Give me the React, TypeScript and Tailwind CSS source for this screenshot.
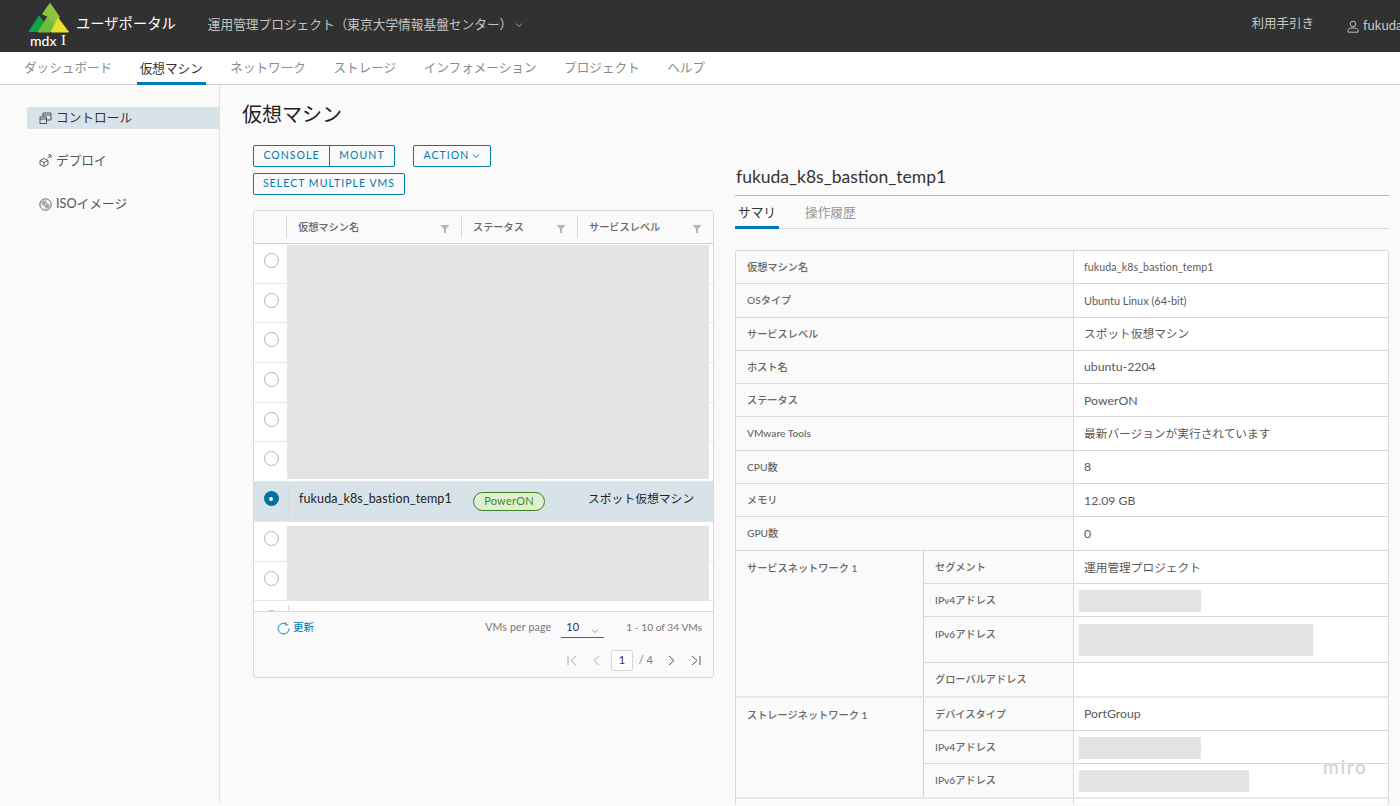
const font = "font-['Lato','Noto_Sans_CJK_JP',sans-serif]";

function Logo() {
  return (
    <svg width="42" height="30" viewBox="0 0 42 30" className="block" strokeLinejoin="round">
      <polygon points="1,28.5 11,13 17,21 11,28.5" fill="#12a04a" stroke="#12a04a" strokeWidth="1" />
      <polygon points="10,29 20,13 27,21 22,29" fill="#6fbb3a" stroke="#6fbb3a" strokeWidth="1" />
      <polygon points="15,11 22,1 31,14 27,21 20,13" fill="#8cc63f" stroke="#8cc63f" strokeWidth="1.5" />
      <polygon points="23,29 30,15 40.5,29" fill="#e8e030" stroke="#e8e030" strokeWidth="1" />
    </svg>
  );
}

function Chevron({ className = "" }: { className?: string }) {
  return (
    <svg width="8" height="6" viewBox="0 0 8 6" className={className} fill="none" stroke="currentColor" strokeWidth="1">
      <path d="M1 1.5 L4 4.5 L7 1.5" />
    </svg>
  );
}

function Filter() {
  return (
    <svg width="10" height="10" viewBox="0 0 10 10" className="shrink-0">
      <path d="M0.5 1 H9.5 L6 5 V9.5 L4 8.5 V5 Z" fill="#b5b5b5" />
    </svg>
  );
}

function Radio({ on = false }: { on?: boolean }) {
  return on ? (
    <span className="flex h-[15px] w-[15px] items-center justify-center rounded-full bg-[#0072a3]">
      <span className="h-[4px] w-[4px] rounded-full bg-white" />
    </span>
  ) : (
    <span className="block h-[15px] w-[15px] rounded-full border border-[#b3b3b3] bg-white" />
  );
}

function Btn({ children, className = "" }: { children: React.ReactNode; className?: string }) {
  return (
    <span className={`flex h-[22px] items-center justify-center border border-[#0079ad] text-[10.5px] font-normal tracking-[0.1em] text-[#0079ad] ${className}`}>
      {children}
    </span>
  );
}

function Row({ label, children, v = "text-[11.7px]" }: { label: string; children?: React.ReactNode; v?: string }) {
  return (
    <div className="flex h-[33.3px] border-b border-[#d8d8d8]">
      <div className="flex w-[338px] shrink-0 items-center border-r border-[#d8d8d8] bg-[#fafafa] pl-[11px] pt-px text-[10.2px] font-medium text-[#666]">{label}</div>
      <div className={`flex flex-1 items-center bg-white pl-[10px] pt-px text-[#5a5a5a] ${v}`}>{children}</div>
    </div>
  );
}

function Sub({ label, children, h = "h-[33.3px]", top = false }: { label: string; children?: React.ReactNode; h?: string; top?: boolean }) {
  return (
    <div className={`flex ${h} border-b border-[#d8d8d8]`}>
      <div className={`flex w-[150px] shrink-0 border-r border-[#d8d8d8] bg-[#fafafa] pl-[11px] text-[10.2px] font-medium text-[#666] ${top ? "items-start pt-[10px]" : "items-center pt-px"}`}>{label}</div>
      <div className="flex flex-1 items-center bg-white pl-[10px] pt-px text-[11.7px] text-[#5a5a5a]">{children}</div>
    </div>
  );
}

function Blank({ w, h = "h-[22px]" }: { w: string; h?: string }) {
  return <div className={`-ml-[5px] bg-[#e4e4e4] ${w} ${h}`} />;
}

function VmRow({ sel = false }: { sel?: boolean }) {
  return (
    <div className={`flex h-[39.7px] shrink-0 border-b border-[#e8e8e8] ${sel ? "bg-[#d8e3e9]" : "bg-white"}`}>
      <div className="flex w-[34px] shrink-0 justify-center pt-[9px]">
        <Radio on={sel} />
      </div>
      <div className="my-[4px] w-px bg-[#d8d8d8]" />
      {sel && (
        <div className="flex flex-1 text-[#222]">
          <div className="w-[184px] shrink-0 pl-[10px] pt-[8px] text-[12.5px] leading-[18px] tracking-[0.01em]">fukuda_k8s_bastion_temp1</div>
          <div className="w-[104px] shrink-0 pt-[10px]">
            <span className="flex h-[19px] w-[72px] items-center justify-center rounded-full border border-[#3f7f1e] bg-[#dff0d0] text-[11px] tracking-[0.02em] text-[#3f8a1f]">PowerON</span>
          </div>
          <div className="whitespace-nowrap pl-[11px] pt-[8px] text-[11.8px] leading-[18px]">スポット仮想マシン</div>
        </div>
      )}
    </div>
  );
}

function Th({ w, children }: { w: string; children: React.ReactNode }) {
  return (
    <div className={`flex ${w} shrink-0 items-center`}>
      <div className="h-[22px] w-px bg-[#d8d8d8]" />
      <div className="flex flex-1 items-center justify-between pl-[11px] pr-[11px] pt-px text-[10.2px] font-medium text-[#666]">
        <span>{children}</span>
        <span className="mt-[3px]"><Filter /></span>
      </div>
    </div>
  );
}

export default function App() {
  const nav = ["ダッシュボード", "仮想マシン", "ネットワーク", "ストレージ", "インフォメーション", "プロジェクト", "ヘルプ"];
  return (
    <div className={`relative flex h-[806px] w-[1400px] flex-col overflow-hidden bg-[#fafafa] ${font}`}>
      <header className="flex h-[52px] shrink-0 items-center bg-[#313131] pl-[28px] text-[#d0d0d0]">
        <div className="relative h-[52px] w-[48px] shrink-0">
          <div className="absolute left-0 top-[3px]"><Logo /></div>
          <span className="absolute left-[2px] top-[32px] text-[14px] font-medium leading-[17px] text-white">mdx</span>
          <span className="absolute left-[33px] top-[32px] font-['Liberation_Serif',serif] text-[15px] leading-[17px] text-white">I</span>
        </div>
        <span className="-mt-[4px] text-[14.3px] text-white">ユーザポータル</span>
        <span className="-mt-[2px] ml-[32px] text-[12.7px] text-[#c4c4c4]">運用管理プロジェクト（東京大学情報基盤センター）</span>
        <Chevron className="-mt-[2px] ml-[3px] text-[#a0a0a0]" />
        <span className="-mt-[3px] ml-auto text-[12.5px] text-[#c8c8c8]">利用手引き</span>
        <span className="ml-[33px] flex w-[53px] shrink-0 items-center gap-[4px] overflow-hidden whitespace-nowrap text-[13px] text-[#c8c8c8]">
          <svg width="12" height="13" viewBox="0 0 12 13" fill="none" stroke="currentColor" strokeWidth="0.9" className="shrink-0">
            <circle cx="6" cy="4" r="2.8" />
            <path d="M1 12.2 V10.2 C1 8.8 3 8 6 8 C9 8 11 8.8 11 10.2 V12.2 Z" />
          </svg>
          fukuda
        </span>
      </header>

      <nav className="flex h-[33px] shrink-0 items-stretch gap-[27.6px] border-b border-[#d0d0d0] bg-white pl-[24px] text-[12.6px] text-[#8c8c8c]">
        {nav.map((n, i) =>
          i === 1 ? (
            <span key={n} className="-mx-[3px] -mb-px flex items-center border-b-[3px] border-[#0079b8] px-[3px] pt-[4px] text-[#333]">{n}</span>
          ) : (
            <span key={n} className="flex items-center pt-px">{n}</span>
          )
        )}
      </nav>

      <div className="flex min-h-0 flex-1">
        <aside className="mb-[4px] w-[220px] shrink-0 border-r border-[#e0e0e0] pl-[27px] pt-[22px] text-[12.7px] text-[#555]">
          <div className="flex h-[22px] items-center gap-[4px] rounded-l-[2px] bg-[#d8e3e9] pb-px pl-[12px] text-[#333]">
            <svg width="13" height="13" viewBox="0 0 13 13" fill="none" stroke="#444" strokeWidth="0.9">
              <rect x="1" y="6" width="6.5" height="6.5" />
              <path d="M4 6 V2 H12 V9 H7.5" />
              <path d="M4 4 H12" />
              <path d="M1 8 H7.5" />
            </svg>
            コントロール
          </div>
          <div className="mt-[21px] flex h-[22px] items-center gap-[4px] pb-px pl-[12px]">
            <svg width="13" height="13" viewBox="0 0 13 13" fill="none" stroke="#555" strokeWidth="0.9">
              <path d="M5 4.5 L9 6.5 V10.5 L5 12.5 L1 10.5 V6.5 Z" />
              <path d="M1 6.5 L5 8.5 L9 6.5 M5 8.5 V12.5" />
              <path d="M8.5 4.5 L12 1 M9 1 H12 V4" />
            </svg>
            デプロイ
          </div>
          <div className="mt-[21px] flex h-[22px] items-center gap-[4px] pl-[12px]">
            <svg width="13" height="13" viewBox="0 0 13 13" fill="none" stroke="#555" strokeWidth="0.9">
              <circle cx="6.5" cy="6.5" r="5.7" />
              <circle cx="6.5" cy="6.5" r="1.6" />
              <path d="M2.5 5 L5 2.5 M2.5 7 L7 2.5 M6 10.5 L10.5 6 M8 10.5 L10.5 8" />
            </svg>
            ISOイメージ
          </div>
        </aside>

        <main className="min-w-0 flex-1 pl-[22px]">
          <h1 className="mt-[15px] h-[28px] text-[20px] font-normal leading-[28px] text-[#222]">仮想マシン</h1>
          <div className="flex">
            <div className="ml-[11px] w-[461px] shrink-0">
              <div className="mt-[17px] flex">
                <Btn className="w-[77px] rounded-l-[2px]">CONSOLE</Btn>
                <Btn className="-ml-px w-[66px] rounded-r-[2px]">MOUNT</Btn>
                <Btn className="ml-[18px] w-[78px] gap-[3px] rounded-[2px]">ACTION<Chevron /></Btn>
              </div>
              <Btn className="mt-[6px] w-[152px] rounded-[2px]">SELECT MULTIPLE VMS</Btn>

              <div className="mt-[15px] h-[468px] overflow-hidden rounded-[3px] border border-[#d8d8d8] bg-[#fafafa]">
                <div className="flex h-[33px] border-b border-[#d0d0d0] bg-[#fafafa]">
                  <div className="w-[32px] shrink-0" />
                  <Th w="w-[175px]">仮想マシン名</Th>
                  <Th w="w-[116px]">ステータス</Th>
                  <Th w="w-[136px]">サービスレベル</Th>
                </div>
                <div className="relative h-[368px] overflow-hidden border-b border-[#d8d8d8]">
                  <div className="flex flex-col">
                    {[0, 1, 2, 3, 4, 5, 6, 7, 8, 9].map((i) => (
                      <VmRow key={i} sel={i === 6} />
                    ))}
                  </div>
                  <div className="absolute left-[33px] top-[1px] h-[234px] w-[422px] bg-[#e4e4e4]" />
                  <div className="absolute left-[33px] top-[282px] h-[75px] w-[422px] bg-[#e4e4e4]" />
                </div>
                <div className="flex h-[32px] items-center pl-[23px] pr-[11px] text-[10.5px]">
                  <svg width="13" height="13" viewBox="0 0 13 13" fill="none" stroke="#0079ad" strokeWidth="0.9">
                    <path d="M8.6 1.6 A5.4 5.4 0 1 0 12 6.5" />
                    <path d="M8.6 0.2 V3 H11.4" />
                  </svg>
                  <span className="ml-[3px] text-[#0079ad]">更新</span>
                  <span className="ml-auto tracking-[0.02em] text-[#777]">VMs per page</span>
                  <span className="relative ml-[10px] flex h-[20px] w-[43px] items-center border-b border-[#0079b8] pl-[5px] text-[11px] text-[#333]">
                    10
                    <Chevron className="absolute right-[5px] top-[10px] text-[#999]" />
                  </span>
                  <span className="ml-[22px] text-[10.2px] text-[#777]">1 - 10 of 34 VMs</span>
                </div>
                <div className="flex h-[33px] items-center justify-end pr-[12px] text-[11px] text-[#777]">
                  <svg width="11" height="11" viewBox="0 0 11 11" fill="none" stroke="#aaa" strokeWidth="1"><path d="M1 1 V10 M9 1 L4 5.5 L9 10" /></svg>
                  <svg width="11" height="11" viewBox="0 0 11 11" fill="none" stroke="#aaa" strokeWidth="1" className="ml-[13px]"><path d="M8 1 L3 5.5 L8 10" /></svg>
                  <span className="ml-[9px] flex h-[21px] w-[22px] items-center justify-center rounded-[2px] border border-[#d8d8d8] bg-white text-[#333]">1</span>
                  <span className="ml-[6px] whitespace-pre">/ 4</span>
                  <svg width="11" height="11" viewBox="0 0 11 11" fill="none" stroke="#555" strokeWidth="1" className="ml-[13px]"><path d="M3 1 L8 5.5 L3 10" /></svg>
                  <svg width="11" height="11" viewBox="0 0 11 11" fill="none" stroke="#555" strokeWidth="1" className="ml-[13px]"><path d="M2 1 L7 5.5 L2 10 M10 1 V10" /></svg>
                </div>
              </div>
            </div>

            <div className="ml-[21px] w-[654px] shrink-0">
              <div className="mt-[36px] h-[32px] border-b border-[#b8b8b8] pl-px text-[17.5px] leading-[26px] text-[#333]">fukuda_k8s_bastion_temp1</div>
              <div className="flex h-[33px] items-stretch gap-[26px] border-b border-[#d8d8d8] text-[12.7px]">
                <span className="-mb-px flex w-[44px] items-center justify-center border-b-[3px] border-[#0079b8] pt-[4px] text-[#333]">サマリ</span>
                <span className="flex items-center pt-px text-[#999]">操作履歴</span>
              </div>
              <div className="mt-[21px] overflow-hidden rounded-t-[3px] border border-b-0 border-[#d8d8d8]">
                <Row label="仮想マシン名" v="text-[10.6px] tracking-[0.01em]">fukuda_k8s_bastion_temp1</Row>
                <Row label="OSタイプ" v="text-[10.9px]">Ubuntu Linux (64-bit)</Row>
                <Row label="サービスレベル">スポット仮想マシン</Row>
                <Row label="ホスト名" v="text-[12.3px]">ubuntu-2204</Row>
                <Row label="ステータス" v="text-[12.3px]">PowerON</Row>
                <Row label="VMware Tools">最新バージョンが実行されています</Row>
                <Row label="CPU数" v="text-[12.3px]">8</Row>
                <Row label="メモリ" v="text-[12.3px]">12.09 GB</Row>
                <Row label="GPU数" v="text-[12.3px]">0</Row>
                <div className="flex border-b-2 border-[#e8e8e8]">
                  <div className="w-[188px] shrink-0 border-r border-[#d0d0d0] bg-[#fafafa] pl-[11px] pt-[10px] text-[10.2px] font-medium text-[#666]">サービスネットワーク 1</div>
                  <div className="flex-1">
                    <Sub label="セグメント">運用管理プロジェクト</Sub>
                    <Sub label="IPv4アドレス"><Blank w="w-[122px]" /></Sub>
                    <Sub label="IPv6アドレス" h="h-[46px]" top><Blank w="w-[234px]" h="h-[32px]" /></Sub>
                    <div className="flex h-[32.5px]">
                      <div className="flex w-[150px] shrink-0 items-center border-r border-[#d8d8d8] bg-[#fafafa] pl-[11px] pt-px text-[10.2px] font-medium text-[#666]">グローバルアドレス</div>
                      <div className="flex-1 bg-white" />
                    </div>
                  </div>
                </div>
                <div className="flex border-b-2 border-[#e8e8e8]">
                  <div className="w-[188px] shrink-0 border-r border-[#d0d0d0] bg-[#fafafa] pl-[11px] pt-[10px] text-[10.2px] font-medium text-[#666]">ストレージネットワーク 1</div>
                  <div className="flex-1">
                    <Sub label="デバイスタイプ"><span className="text-[12.3px]">PortGroup</span></Sub>
                    <Sub label="IPv4アドレス"><Blank w="w-[122px]" /></Sub>
                    <div className="flex h-[32.5px]">
                      <div className="flex w-[150px] shrink-0 items-center border-r border-[#d8d8d8] bg-[#fafafa] pl-[11px] pt-px text-[10.2px] font-medium text-[#666]">IPv6アドレス</div>
                      <div className="flex flex-1 items-center bg-white pl-[10px]"><Blank w="w-[170px]" /></div>
                    </div>
                  </div>
                </div>
                <div className="flex h-[5px]">
                  <div className="w-[338px] shrink-0 border-r border-[#d8d8d8] bg-[#fafafa]" />
                  <div className="flex-1 bg-white" />
                </div>
              </div>
            </div>
          </div>
        </main>
      </div>
      <span className="pointer-events-none absolute left-[1323px] top-[753px] text-[19px] font-medium tracking-[0.09em] text-[#cfcfdc]">miro</span>
    </div>
  );
}
